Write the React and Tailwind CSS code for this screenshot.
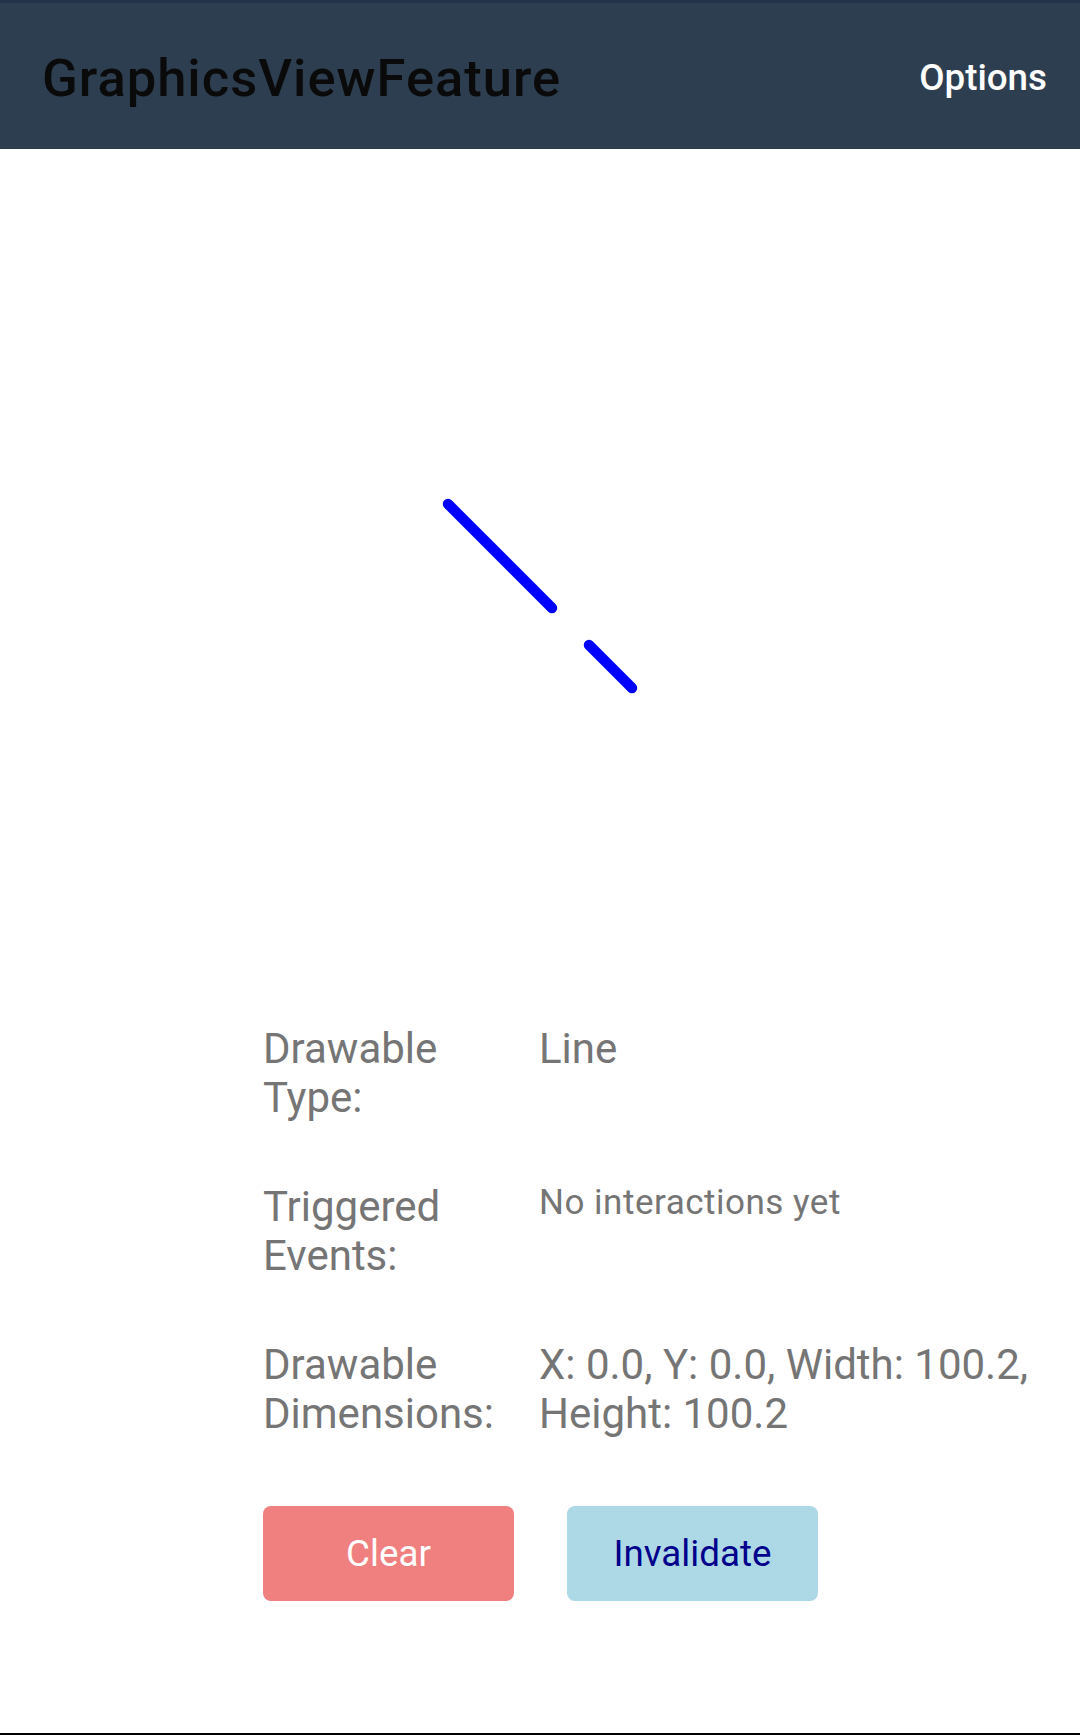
export default function App() {
  const rows = [
    { label: ['Drawable', 'Type:'], value: 'Line', small: false },
    { label: ['Triggered', 'Events:'], value: 'No interactions yet', small: true },
    { label: ['Drawable', 'Dimensions:'], value: 'X: 0.0, Y: 0.0, Width: 100.2, Height: 100.2', small: false },
  ];

  return (
    <div className="w-[1080px] h-[1735px] flex flex-col bg-white font-['Roboto',sans-serif] border-b-2 border-black">
      {/* toolbar */}
      <div className="h-[3px] bg-[#21344a]" />
      <header className="h-[146px] bg-[#2d3e50] flex items-center justify-between pl-[42px] pr-[33px] pt-[4px]">
        <h1 className="text-[52.5px] font-medium text-[#0a0a0a] leading-none tracking-[1px]">GraphicsViewFeature</h1>
        <span className="text-[36.75px] font-medium text-white leading-none">Options</span>
      </header>

      {/* drawable canvas */}
      <div className="h-[875px]">
        <svg width="1080" height="875" viewBox="0 0 1080 875">
          <line x1="448" y1="355" x2="552" y2="459" stroke="#0000ff" strokeWidth="10.5" strokeLinecap="round" />
          <line x1="589" y1="496" x2="632" y2="539" stroke="#0000ff" strokeWidth="10.5" strokeLinecap="round" />
        </svg>
      </div>

      {/* info */}
      <div className="pl-[263px] grid grid-cols-[276px_500px] gap-y-[60px] text-[#757575]">
        {rows.map((r, i) => (
          <div key={i} className="contents">
            <div className="text-[42px] leading-[49px] h-[98px]">
              {r.label[0]}
              <br />
              {r.label[1]}
            </div>
            <div
              className={
                r.small
                  ? 'text-[35px] leading-[41px] tracking-[0.5px]'
                  : 'text-[42px] leading-[49px]'
              }
            >
              {r.value}
            </div>
          </div>
        ))}
      </div>

      <div className="pl-[263px] mt-[68px] flex gap-[53px]">
        <button className="w-[251px] h-[95px] rounded-[8px] bg-[#f08080] text-white text-[36.75px]">Clear</button>
        <button className="w-[251px] h-[95px] rounded-[8px] bg-[#add8e6] text-[#00008b] text-[36.75px]">Invalidate</button>
      </div>
    </div>
  );
}
